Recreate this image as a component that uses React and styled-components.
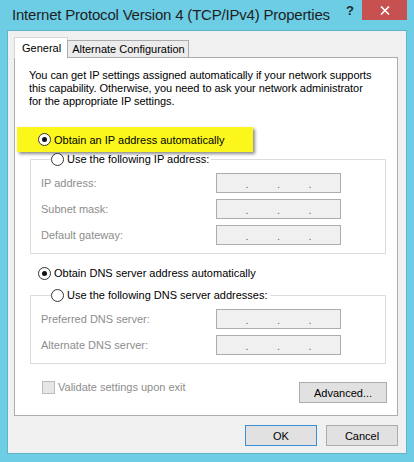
import styled, { createGlobalStyle } from 'styled-components'

const GlobalStyle = createGlobalStyle`
  html, body {
    margin: 0;
    padding: 0;
    background: #6ccde5;
  }
  * {
    box-sizing: border-box;
  }
`

const Window = styled.div`
  width: 414px;
  height: 462px;
  background: #6ccde5;
  display: flex;
  flex-direction: column;
  padding: 0 7px 8px 7px;
  font-family: 'Liberation Sans', Arial, sans-serif;
  font-size: 11px;
  color: #000;
`

const TitleBar = styled.div`
  height: 30px;
  display: flex;
  align-items: flex-start;
`

const Title = styled.div`
  font-size: 15px;
  color: #1f1f1f;
  padding: 6px 0 0 5px;
  letter-spacing: -0.2px;
  flex: 1;
  white-space: nowrap;
`

const HelpMark = styled.div`
  font-weight: bold;
  font-size: 13px;
  color: #1e2b33;
  padding: 3px 8px 0 0;
`

const CloseButton = styled.div`
  width: 45px;
  height: 20px;
  background: #c75050;
  display: flex;
  align-items: center;
  justify-content: center;
`

const Client = styled.div`
  flex: 1;
  background: #f0f0f0;
  border: 1px solid #5eb4cb;
  padding: 7px 8px 0 6px;
  display: flex;
  flex-direction: column;
`

const Tabs = styled.div`
  display: flex;
  align-items: flex-end;
  height: 20px;
  position: relative;
  z-index: 1;
  margin-bottom: -1px;
`

const Tab = styled.div`
  height: ${(p) => (p.active ? '21px' : '18px')};
  padding: ${(p) => (p.active ? '0 6px 0 7px' : '0 3px 0 4px')};
  border: 1px solid ${(p) => (p.active ? '#d6d6d6' : '#acacac')};
  border-bottom: ${(p) => (p.active ? '1px solid #fff' : '1px solid #acacac')};
  margin-left: ${(p) => (p.active ? '0' : '-1px')};
  background: ${(p) => (p.active ? '#fff' : '#ececec')};
  display: flex;
  align-items: center;
  white-space: nowrap;
`

const Panel = styled.div`
  height: 359px;
  background: #fff;
  border: 1px solid #acacac;
  padding: 11px 0 0 14px;
  display: flex;
  flex-direction: column;
`

const Intro = styled.p`
  margin: 0;
  line-height: 13px;
  letter-spacing: -0.05px;
  white-space: nowrap;
`

const Highlight = styled.div`
  margin: 19px 0 0 -12px;
  width: 236px;
  height: 25px;
  background: #fbf71c;
  box-shadow: 2px 2px 3px rgba(0, 0, 0, 0.45);
  display: flex;
  align-items: center;
  padding-left: 21px;
`

const Choice = styled.label`
  display: flex;
  align-items: center;
  gap: 3px;
  line-height: 14px;
  white-space: nowrap;
  margin: ${(p) => p.$margin || '0'};
  padding-left: ${(p) => p.$indent || '0'};
`

const Radio = styled.span`
  width: 13px;
  height: 13px;
  border-radius: 50%;
  border: 1px solid #333;
  background: #fff;
  display: flex;
  align-items: center;
  justify-content: center;
  &::after {
    content: '';
    width: 5px;
    height: 5px;
    border-radius: 50%;
    background: ${(p) => (p.checked ? '#111' : 'transparent')};
  }
`

const Group = styled.fieldset`
  margin: ${(p) => p.$margin || '0'};
  margin-left: 1px;
  width: 356px;
  border: 1px solid #dcdcdc;
  padding: 7px 0 8px 10px;
  display: flex;
  flex-direction: column;
  gap: 6px;
`

const Legend = styled.legend`
  padding: 0 2px 0 0;
  margin-left: 10px;
`

const Row = styled.div`
  display: flex;
  align-items: center;
  height: 20px;
`

const FieldLabel = styled.span`
  width: 175px;
  color: #8d8d8d;
`

const IpBox = styled.div`
  width: 125px;
  height: 20px;
  background: #f0f0f0;
  border: 1px solid #adadad;
  display: flex;
  justify-content: space-evenly;
  align-items: center;
  color: #6d6d6d;
  font-size: 11px;
  line-height: 11px;
  padding-top: 2px;
`

const Footer = styled.div`
  margin: 17px 0 0 1px;
  width: 357px;
  display: flex;
  justify-content: space-between;
  align-items: flex-start;
`

const Check = styled.label`
  display: flex;
  align-items: center;
  gap: 3px;
  padding-left: 12px;
  color: #8d8d8d;
  line-height: 13px;
`

const CheckBox = styled.span`
  width: 13px;
  height: 13px;
  background: #e6e6e6;
  border: 1px solid #bcbcbc;
`

const Button = styled.button`
  width: ${(p) => p.$width || '72px'};
  height: 21px;
  margin-top: ${(p) => p.$offset || '0'};
  background: #e1e1e1;
  border: 1px solid ${(p) => (p.$default ? '#3c8fd6' : '#adadad')};
  font-family: inherit;
  font-size: 11px;
  color: #000;
  padding: 0;
`

const Actions = styled.div`
  display: flex;
  justify-content: flex-end;
  gap: 9px;
  margin-top: 9px;
`

function IpField({ label }) {
  return (
    <Row>
      <FieldLabel>{label}</FieldLabel>
      <IpBox>
        <span>.</span>
        <span>.</span>
        <span>.</span>
      </IpBox>
    </Row>
  )
}

export default function App() {
  return (
    <>
      <GlobalStyle />
      <Window>
        <TitleBar>
          <Title>Internet Protocol Version 4 (TCP/IPv4) Properties</Title>
          <HelpMark>?</HelpMark>
          <CloseButton>
            <svg width="10" height="9" viewBox="0 0 10 9">
              <path d="M1 0.5 L9 8.5 M9 0.5 L1 8.5" stroke="#fff" strokeWidth="1.6" />
            </svg>
          </CloseButton>
        </TitleBar>
        <Client>
          <Tabs>
            <Tab active>General</Tab>
            <Tab>Alternate Configuration</Tab>
          </Tabs>
          <Panel>
            <Intro>
              You can get IP settings assigned automatically if your network supports
              <br />
              this capability. Otherwise, you need to ask your network administrator
              <br />
              for the appropriate IP settings.
            </Intro>
            <Highlight>
              <Choice>
                <Radio checked />
                Obtain an IP address automatically
              </Choice>
            </Highlight>
            <Group>
              <Legend>
                <Choice>
                  <Radio />
                  Use the following IP address:
                </Choice>
              </Legend>
              <IpField label="IP address:" />
              <IpField label="Subnet mask:" />
              <IpField label="Default gateway:" />
            </Group>
            <Choice $margin="12px 0 0 0" $indent="9px">
              <Radio checked />
              Obtain DNS server address automatically
            </Choice>
            <Group $margin="8px 0 0 0">
              <Legend>
                <Choice>
                  <Radio />
                  Use the following DNS server addresses:
                </Choice>
              </Legend>
              <IpField label="Preferred DNS server:" />
              <IpField label="Alternate DNS server:" />
            </Group>
            <Footer>
              <Check>
                <CheckBox />
                Validate settings upon exit
              </Check>
              <Button $width="88px" $offset="1px">Advanced...</Button>
            </Footer>
          </Panel>
          <Actions>
            <Button $default>OK</Button>
            <Button>Cancel</Button>
          </Actions>
        </Client>
      </Window>
    </>
  )
}
